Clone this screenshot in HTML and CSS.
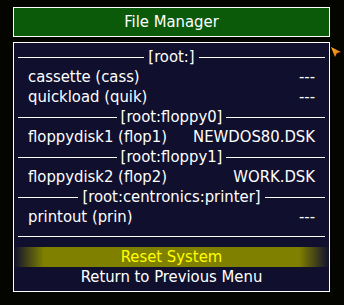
FILE: index.html
```html
<!DOCTYPE html>
<html lang="en">
<head>
  <meta charset="UTF-8" />
  <title>File Manager</title>
  <link rel="stylesheet" href="styles.css">
</head>
<body>
  <div class="menu">
    <div class="title">File Manager</div>

    <div class="panel">
      <div class="section"><span>[root:]</span></div>
      <div class="item"><span>cassette (cass)</span><span>---</span></div>
      <div class="item"><span>quickload (quik)</span><span>---</span></div>
      <div class="section"><span>[root:floppy0]</span></div>
      <div class="item"><span>floppydisk1 (flop1)</span><span>NEWDOS80.DSK</span></div>
      <div class="section"><span>[root:floppy1]</span></div>
      <div class="item"><span>floppydisk2 (flop2)</span><span>WORK.DSK</span></div>
      <div class="section"><span>[root:centronics:printer]</span></div>
      <div class="item"><span>printout (prin)</span><span>---</span></div>
      <div class="divider"></div>
      <div class="action selected">Reset System</div>
      <div class="action">Return to Previous Menu</div>

      <!-- scroll pointer -->
      <svg class="pointer" width="11" height="11" viewBox="0 0 11 11">
        <defs>
          <linearGradient id="ptr" x1="0" y1="0" x2="1" y2="1">
            <stop offset="0" stop-color="#ffb030" />
            <stop offset="1" stop-color="#e06a00" />
          </linearGradient>
        </defs>
        <polygon points="0,0 10,5 6,6 4,10" fill="url(#ptr)" />
      </svg>
    </div>
  </div>
</body>
</html>
```

FILE: styles.css
```css
* {
  margin: 0;
  padding: 0;
  box-sizing: border-box;
}

body {
  background-color: #050500;
  color: #ffffff;
  font-family: 'DejaVu Sans Condensed', 'DejaVu Sans', sans-serif;
  font-size: 16.5px;
  line-height: 20px;
}

.menu {
  width: 317px;
  margin: 7px 0 0 13px;
}

.title {
  height: 30px;
  line-height: 28px;
  border: 1px solid #ffffff;
  background-color: #0a5a0a;
  text-align: center;
}

.panel {
  position: relative;
  margin-top: 5px;
  border: 1px solid #ffffff;
  background-color: #10102e;
  padding: 4px 0;
}

.section {
  display: flex;
  align-items: center;
  gap: 4px;
  height: 20px;
  padding: 0 4px;
}

.section::before,
.section::after {
  content: '';
  flex: 1;
  height: 1px;
  background-color: #ffffff;
}

.item {
  display: flex;
  justify-content: space-between;
  height: 20px;
  padding: 0 14px;
}

.divider {
  height: 20px;
  margin: 0 4px;
  position: relative;
}

.divider::after {
  content: '';
  position: absolute;
  left: 0;
  right: 0;
  top: 9px;
  height: 1px;
  background-color: #ffffff;
}

.action {
  height: 20px;
  text-align: center;
}

.selected {
  color: #ffff00;
  background: linear-gradient(to right,
    #10102e 0, #808000 30px, #808000 calc(100% - 30px), #10102e 100%);
}

.pointer {
  position: absolute;
  right: -13px;
  top: 4px;
}
```
